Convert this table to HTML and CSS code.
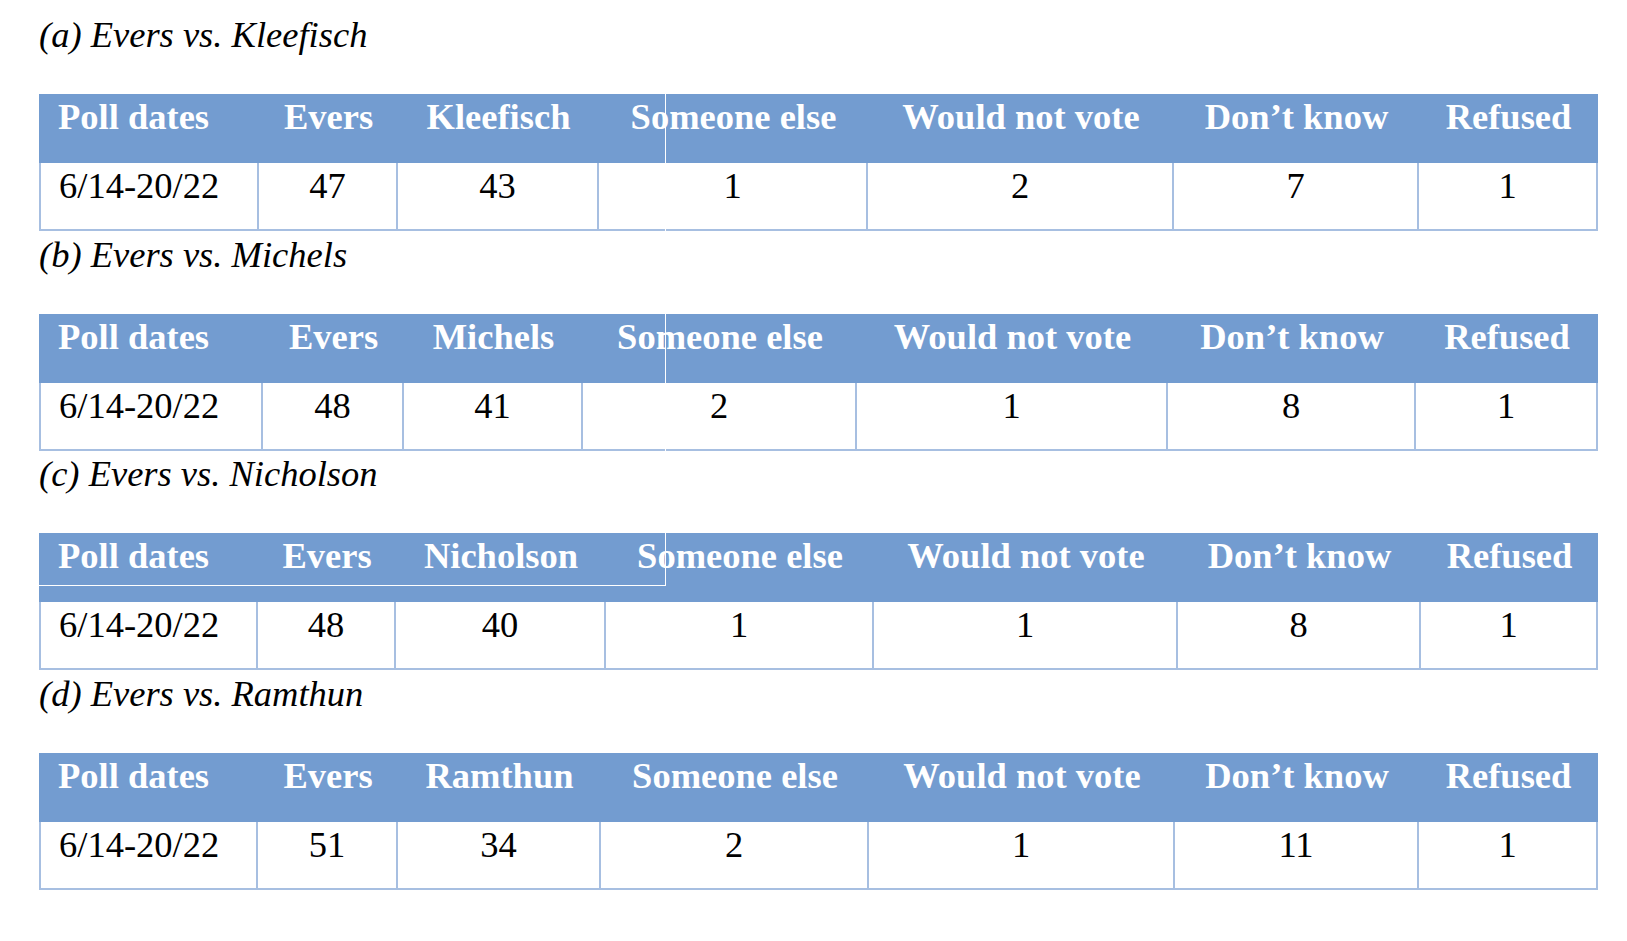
FILE: index.html
```html
<!DOCTYPE html>
<html lang="en">
<head>
<meta charset="utf-8">
<title>Evers poll results</title>
<link rel="stylesheet" href="styles.css">
</head>
<body>
<div class="page">
  <section class="poll">
    <p class="caption">(a) Evers vs. Kleefisch</p>
    <div class="table-wrap">
      <table class="results results-a">
        <colgroup><col><col><col><col><col><col><col></colgroup>
        <thead><tr><th>Poll dates</th><th>Evers</th><th>Kleefisch</th><th>Someone else</th><th>Would not vote</th><th>Don’t know</th><th>Refused</th></tr></thead>
        <tbody><tr><td>6/14-20/22</td><td>47</td><td>43</td><td>1</td><td>2</td><td>7</td><td>1</td></tr></tbody>
      </table>
      <span class="seam"></span>
    </div>
  </section>

  <section class="poll">
    <p class="caption">(b) Evers vs. Michels</p>
    <div class="table-wrap">
      <table class="results results-b">
        <colgroup><col><col><col><col><col><col><col></colgroup>
        <thead><tr><th>Poll dates</th><th>Evers</th><th>Michels</th><th>Someone else</th><th>Would not vote</th><th>Don’t know</th><th>Refused</th></tr></thead>
        <tbody><tr><td>6/14-20/22</td><td>48</td><td>41</td><td>2</td><td>1</td><td>8</td><td>1</td></tr></tbody>
      </table>
      <span class="seam"></span>
    </div>
  </section>

  <section class="poll">
    <p class="caption">(c) Evers vs. Nicholson</p>
    <div class="table-wrap">
      <table class="results results-c">
        <colgroup><col><col><col><col><col><col><col></colgroup>
        <thead><tr><th>Poll dates</th><th>Evers</th><th>Nicholson</th><th>Someone else</th><th>Would not vote</th><th>Don’t know</th><th>Refused</th></tr></thead>
        <tbody><tr><td>6/14-20/22</td><td>48</td><td>40</td><td>1</td><td>1</td><td>8</td><td>1</td></tr></tbody>
      </table>
      <span class="seam-box"></span>
    </div>
  </section>

  <section class="poll">
    <p class="caption">(d) Evers vs. Ramthun</p>
    <div class="table-wrap">
      <table class="results results-d">
        <colgroup><col><col><col><col><col><col><col></colgroup>
        <thead><tr><th>Poll dates</th><th>Evers</th><th>Ramthun</th><th>Someone else</th><th>Would not vote</th><th>Don’t know</th><th>Refused</th></tr></thead>
        <tbody><tr><td>6/14-20/22</td><td>51</td><td>34</td><td>2</td><td>1</td><td>11</td><td>1</td></tr></tbody>
      </table>
    </div>
  </section>
</div>
</body>
</html>
```

FILE: styles.css
```css
html, body {
  margin: 0;
  padding: 0;
  background: #ffffff;
}

body {
  font-family: "Liberation Serif", "Times New Roman", serif;
  color: #000000;
}

.page {
  padding: 14px 0 0 39px;
}

.caption {
  margin: 0 0 38px;
  font-style: italic;
  font-size: 36.5px;
  line-height: 42px;
}

.table-wrap {
  position: relative;
  width: 1559px;
  margin-bottom: 2.6px;
}

.results {
  border-collapse: separate;
  border-spacing: 0;
  table-layout: fixed;
  width: 1559px;
  font-size: 36.5px;
  line-height: 42px;
}

.results th {
  background: #739cd0;
  color: #ffffff;
  font-weight: bold;
  padding: 2px 0 25px;
  text-align: center;
  white-space: nowrap;
}

.results th:first-child {
  text-align: left;
  padding-left: 19px;
}

.results td {
  border-right: 2px solid #a7bfe1;
  border-bottom: 2px solid #a7bfe1;
  padding: 2px 0 22px;
  text-align: center;
  white-space: nowrap;
}

.results td:first-child {
  border-left: 2px solid #a7bfe1;
  text-align: left;
  padding-left: 18px;
}

/* column widths per table */
.results-a col:nth-child(1) { width: 220px; }
.results-a col:nth-child(2) { width: 139px; }
.results-a col:nth-child(3) { width: 201px; }
.results-a col:nth-child(4) { width: 269px; }
.results-a col:nth-child(5) { width: 306px; }
.results-a col:nth-child(6) { width: 245px; }
.results-a col:nth-child(7) { width: 179px; }

.results-b col:nth-child(1) { width: 224px; }
.results-b col:nth-child(2) { width: 141px; }
.results-b col:nth-child(3) { width: 179px; }
.results-b col:nth-child(4) { width: 274px; }
.results-b col:nth-child(5) { width: 311px; }
.results-b col:nth-child(6) { width: 248px; }
.results-b col:nth-child(7) { width: 182px; }

.results-c col:nth-child(1) { width: 219px; }
.results-c col:nth-child(2) { width: 138px; }
.results-c col:nth-child(3) { width: 210px; }
.results-c col:nth-child(4) { width: 268px; }
.results-c col:nth-child(5) { width: 304px; }
.results-c col:nth-child(6) { width: 243px; }
.results-c col:nth-child(7) { width: 177px; }

.results-d col:nth-child(1) { width: 219px; }
.results-d col:nth-child(2) { width: 140px; }
.results-d col:nth-child(3) { width: 203px; }
.results-d col:nth-child(4) { width: 268px; }
.results-d col:nth-child(5) { width: 306px; }
.results-d col:nth-child(6) { width: 244px; }
.results-d col:nth-child(7) { width: 179px; }

/* white seam lines over the tables */
.seam {
  position: absolute;
  left: 626px;
  top: 0;
  bottom: 0;
  width: 1px;
  background: #ffffff;
}

.seam-box {
  position: absolute;
  left: 0;
  top: 0;
  width: 626px;
  height: 52px;
  border-right: 1px solid #ffffff;
  border-bottom: 1px solid #ffffff;
}
```
